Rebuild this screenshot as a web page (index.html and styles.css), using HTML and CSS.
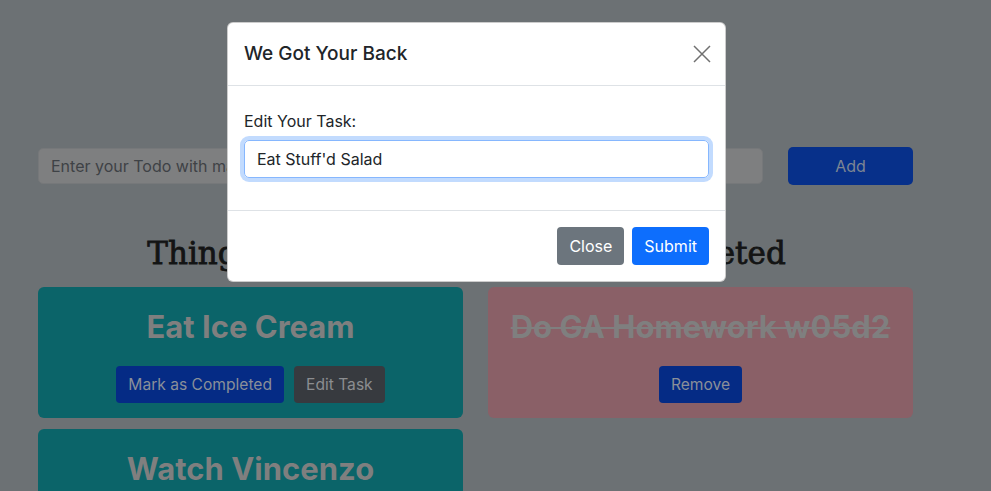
FILE: index.html
```html
<!DOCTYPE html>
<html lang="en">
<head>
<meta charset="utf-8">
<title>Todo</title>
<link rel="stylesheet" href="styles.css">
</head>
<body>
<main class="page">
  <div class="add-row">
    <div class="todo-input">Enter your Todo with many words here</div>
    <div class="btn-add">Add</div>
  </div>
  <div class="columns">
    <section class="col">
      <h2 class="col-title">Things To Do</h2>
      <div class="card teal">
        <h3 class="card-title">Eat Ice Cream</h3>
        <div class="card-actions">
          <span class="btn dim-blue">Mark as Completed</span>
          <span class="btn dim-dark">Edit Task</span>
        </div>
      </div>
      <div class="card teal">
        <h3 class="card-title">Watch Vincenzo</h3>
        <div class="card-actions">
          <span class="btn dim-blue">Mark as Completed</span>
          <span class="btn dim-dark">Edit Task</span>
        </div>
      </div>
    </section>
    <section class="col">
      <h2 class="col-title">Completed</h2>
      <div class="card pink">
        <h3 class="card-title done">Do GA Homework w05d2</h3>
        <div class="card-actions">
          <span class="btn dim-blue">Remove</span>
        </div>
      </div>
    </section>
  </div>
</main>

<div class="modal">
  <div class="modal-header">
    <h5 class="modal-title">We Got Your Back</h5>
    <span class="btn-close" aria-label="Close">
      <svg width="18" height="18" viewBox="0 0 18 18"><path d="M1 1L17 17M17 1L1 17" stroke="#707070" stroke-width="1.5" fill="none"/></svg>
    </span>
  </div>
  <div class="modal-body">
    <label class="form-label">Edit Your Task:</label>
    <div class="form-control">Eat Stuff'd Salad</div>
  </div>
  <div class="modal-footer">
    <span class="mbtn secondary">Close</span>
    <span class="mbtn primary">Submit</span>
  </div>
</div>
</body>
</html>
```
FILE: styles.css
```css
* { box-sizing: border-box; }
html, body { margin: 0; padding: 0; }
body {
  background: #6c7174;
  font-family: Inter, "Noto Sans", "Liberation Sans", sans-serif;
  width: 991px;
  height: 491px;
  overflow: hidden;
  position: relative;
}
.page {
  width: 875px;
  margin: 0 0 0 38px;
  padding-top: 147px;
}
.add-row {
  display: flex;
  gap: 25px;
  align-items: center;
}
.todo-input {
  flex: 1;
  height: 36px;
  background: #7e7f80;
  border: 1px solid #76787a;
  border-radius: 5px;
  color: #3e4246;
  font-size: 16px;
  line-height: 34px;
  padding: 0 12px;
  white-space: nowrap;
  overflow: hidden;
}
.btn-add {
  width: 125px;
  height: 38px;
  background: #07308a;
  border-radius: 5px;
  color: #7d8593;
  font-size: 16px;
  line-height: 38px;
  text-align: center;
}
.columns {
  display: grid;
  grid-template-columns: 425px 425px;
  gap: 25px;
  margin-top: 40px;
}
.col { display: flex; flex-direction: column; gap: 11px; }
.col-title {
  margin: 0 0 -1px;
  text-align: center;
  font-family: "DejaVu Serif", "Liberation Serif", serif;
  font-weight: 400;
  font-size: 31px;
  line-height: 42px;
  color: #131414;
  height: 52px;
  padding-top: 7px;
  -webkit-text-stroke: 0.8px #131414;
}
.card {
  border-radius: 6px;
  padding: 18px 16px 15px;
  text-align: center;
}
.teal { background: #0b6469; }
.pink { background: #8a6067; }
.card-title {
  margin: 0 0 17px;
  font-size: 31px;
  line-height: 44px;
  font-weight: 700;
  color: #7f7f7f;
  white-space: nowrap;
}
.card-title.done { text-decoration: line-through; text-decoration-thickness: 2px; }
.card-actions {
  display: flex;
  justify-content: center;
  gap: 10px;
}
.btn {
  display: inline-block;
  height: 37px;
  line-height: 37px;
  padding: 0 12px;
  border-radius: 4px;
  font-size: 15.6px;
}
.dim-blue { background: #052b85; color: #8a8f99; }
.dim-dark { background: #373a3f; color: #8b8d90; }

.modal {
  position: absolute;
  left: 227px;
  top: 22px;
  width: 499px;
  background: #fff;
  border: 1px solid rgba(0,0,0,0.2);
  border-radius: 6px;
  color: #212529;
}
.modal-header {
  display: flex;
  align-items: center;
  justify-content: space-between;
  padding: 16px 14px 16px 16px;
  border-bottom: 1px solid #dee2e6;
  height: 63px;
}
.modal-title {
  margin: 0;
  font-size: 19px;
  font-weight: 500;
  line-height: 30px;
}
.btn-close {
  display: flex;
  width: 18px;
  height: 18px;
  align-items: center;
  justify-content: center;
}
.modal-body {
  padding: 23px 16px 16px;
  border-bottom: 1px solid #dee2e6;
}
.form-label {
  display: block;
  font-size: 16px;
  line-height: 24px;
  margin-bottom: 7px;
}
.form-control {
  height: 38px;
  border: 1px solid #86b7fe;
  border-radius: 5px;
  box-shadow: 0 0 0 4px rgba(13,110,253,0.25);
  padding: 0 12px;
  font-size: 16px;
  line-height: 36px;
  margin-bottom: 16px;
}
.modal-footer {
  display: flex;
  justify-content: flex-end;
  gap: 8px;
  padding: 16px 16px 16px;
}
.mbtn {
  height: 38px;
  line-height: 38px;
  padding: 0 12px;
  border-radius: 4px;
  font-size: 16px;
  color: #fff;
}
.secondary { background: #6c757d; }
.primary { background: #0d6efd; }
```
